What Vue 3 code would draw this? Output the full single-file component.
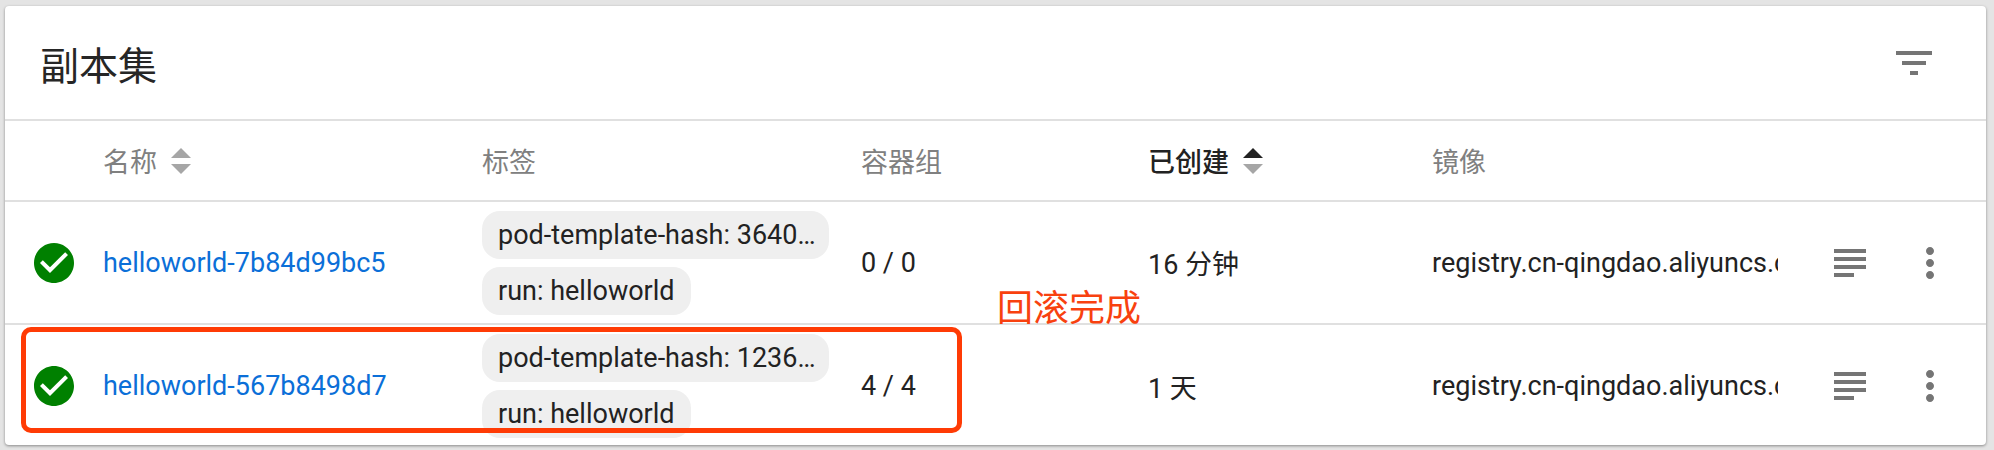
<script setup>
const rows = [
  { name: 'helloworld-7b84d99bc5', hash: 'pod-template-hash: 3640855671', pods: '0 / 0', age: '16 分钟' },
  { name: 'helloworld-567b8498d7', hash: 'pod-template-hash: 1236405483', pods: '4 / 4', age: '1 天' }
]
const image = 'registry.cn-qingdao.aliyuncs.com/kubernetes-helloworld/helloworld:v1'
</script>

<template>
  <div class="page">
    <section class="card">
      <header class="title-bar">
        <h1>副本集</h1>
        <svg class="icon" viewBox="0 0 24 24"><path d="M10 18h4v-2h-4v2zM3 6v2h18V6H3zm3 7h12v-2H6v2z" /></svg>
      </header>

      <div class="grid head">
        <span></span>
        <span class="th">名称
          <span class="sort"><i class="up"></i><i class="down"></i></span>
        </span>
        <span class="th">标签</span>
        <span class="th">容器组</span>
        <span class="th active">已创建
          <span class="sort"><i class="up dark"></i><i class="down"></i></span>
        </span>
        <span class="th">镜像</span>
      </div>

      <div v-for="row in rows" :key="row.name" class="grid row">
        <svg class="icon ok" viewBox="0 0 24 24"><path d="M12 2C6.48 2 2 6.48 2 12s4.48 10 10 10 10-4.48 10-10S17.52 2 12 2zm-2 15l-5-5 1.41-1.41L10 14.17l7.59-7.59L19 8l-9 9z" /></svg>
        <a class="link">{{ row.name }}</a>
        <div class="chips">
          <span class="chip wide">{{ row.hash }}</span>
          <span class="chip">run: helloworld</span>
        </div>
        <span>{{ row.pods }}</span>
        <span>{{ row.age }}</span>
        <span class="image">{{ image }}</span>
        <svg class="icon" viewBox="0 0 24 24"><path d="M14 17H4v2h10v-2zm6-8H4v2h16V9zM4 15h16v-2H4v2zM4 5v2h16V5H4z" /></svg>
        <svg class="icon" viewBox="0 0 24 24"><path d="M12 8c1.1 0 2-.9 2-2s-.9-2-2-2-2 .9-2 2 .9 2 2 2zm0 2c-1.1 0-2 .9-2 2s.9 2 2 2 2-.9 2-2-.9-2-2-2zm0 6c-1.1 0-2 .9-2 2s.9 2 2 2 2-.9 2-2-.9-2-2-2z" /></svg>
      </div>
    </section>

    <div class="callout"></div>
    <div class="note">回滚完成</div>
  </div>
</template>

<style>
html, body { margin: 0; background: #fff; }
</style>

<style scoped>
.page {
  position: relative;
  width: 1994px;
  height: 450px;
  overflow: hidden;
  padding: 6px 8px 5px 5px;
  box-sizing: border-box;
  background: #e4e4e4;
  font-family: Roboto, "Noto Sans CJK SC", sans-serif;
  color: #222;
}
.card {
  height: 439px;
  background: #fff;
  border-radius: 4px;
  box-shadow: 0 1px 3px rgba(0, 0, 0, .4);
}
.title-bar {
  height: 113px;
  display: flex;
  align-items: center;
  justify-content: space-between;
  padding: 0 48px 0 35px;
  border-bottom: 2px solid #e0e0e0;
}
h1 {
  margin: 0;
  font-size: 39px;
  font-weight: 400;
  color: #262626;
}
.grid {
  display: grid;
  grid-template-columns: 98px 379px 379px 287px 284px 394px 80px 48px;
  align-items: center;
  font-size: 27px;
}
.head {
  height: 79px;
  border-bottom: 2px solid #e0e0e0;
}
.th {
  color: #808080;
  display: flex;
  align-items: center;
  gap: 14px;
}
.th.active {
  color: #222;
  font-weight: 500;
}
.sort {
  display: flex;
  flex-direction: column;
  gap: 6px;
}
.sort i {
  display: block;
  width: 0;
  height: 0;
  border-left: 10px solid transparent;
  border-right: 10px solid transparent;
}
.up { border-bottom: 10px solid #a6a6a6; }
.up.dark { border-bottom-color: #222; }
.down { border-top: 10px solid #a6a6a6; }
.row {
  height: 121px;
  border-bottom: 2px solid #e0e0e0;
}
.row:last-child {
  height: 122px;
  border-bottom: 0;
}
.icon {
  display: block;
  width: 48px;
  height: 48px;
  fill: #757575;
}
.ok {
  fill: #008000;
  margin-left: 25px;
}
.link {
  color: #0b6fd8;
}
.chips {
  display: flex;
  flex-direction: column;
  align-items: flex-start;
  gap: 8px;
}
.chip {
  box-sizing: border-box;
  height: 48px;
  line-height: 48px;
  padding: 0 0 0 16px;
  max-width: 347px;
  border-radius: 18px;
  background: #efefef;
  overflow: hidden;
  white-space: nowrap;
  text-overflow: ellipsis;
}
.chip:not(.wide) { padding-right: 16px; }
.image {
  width: 346px;
  overflow: hidden;
  white-space: nowrap;
}
.callout {
  position: absolute;
  left: 21px;
  top: 327px;
  width: 941px;
  height: 106px;
  box-sizing: border-box;
  border: 5px solid #ff3b05;
  border-radius: 10px;
}
.note {
  position: absolute;
  left: 997px;
  top: 287px;
  font-size: 36px;
  line-height: 44px;
  color: #f8410f;
}
</style>
